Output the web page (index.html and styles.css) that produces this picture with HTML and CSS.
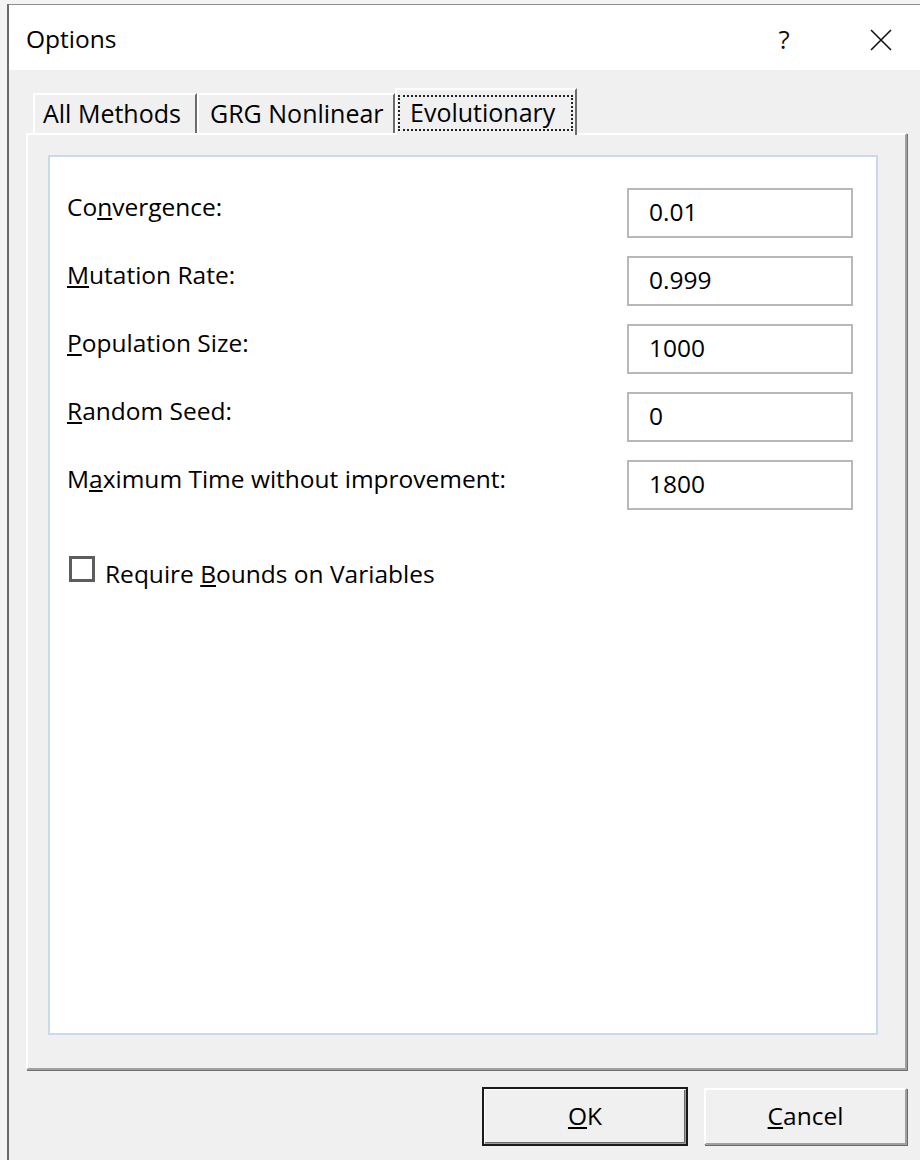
FILE: index.html
```html
<!DOCTYPE html>
<html lang="en">
<head>
<meta charset="utf-8">
<title>Options</title>
<link rel="stylesheet" href="styles.css">
</head>
<body>
<div class="window">
  <div class="titlebar">
    <span class="title">Options</span>
    <span class="help">?</span>
    <span class="close">
      <svg width="24" height="24" viewBox="0 0 24 24"><path d="M2 2 L22 22 M22 2 L2 22" stroke="#111" stroke-width="1.6" fill="none"/></svg>
    </span>
  </div>
  <div class="content">
    <div class="tabs">
      <div class="tab tab-all">All Methods</div>
      <div class="tab tab-grg">GRG Nonlinear</div>
      <div class="tab tab-active"><span class="focus">Evolutionary</span></div>
    </div>
    <div class="panel">
      <div class="page">
        <div class="form">
          <label class="label">Co<u>n</u>vergence:</label>
          <input class="field" type="text" value="0.01">
          <label class="label"><u>M</u>utation Rate:</label>
          <input class="field" type="text" value="0.999">
          <label class="label"><u>P</u>opulation Size:</label>
          <input class="field" type="text" value="1000">
          <label class="label"><u>R</u>andom Seed:</label>
          <input class="field" type="text" value="0">
          <label class="label">M<u>a</u>ximum Time without improvement:</label>
          <input class="field" type="text" value="1800">
        </div>
        <div class="check">
          <span class="box"></span>
          <span class="check-text">Require <u>B</u>ounds on Variables</span>
        </div>
      </div>
    </div>
    <div class="buttons">
      <button class="btn btn-default"><u>O</u>K</button>
      <button class="btn"><u>C</u>ancel</button>
    </div>
  </div>
</div>
</body>
</html>
```
FILE: styles.css
```css
* { box-sizing: border-box; }

html, body {
  margin: 0;
  padding: 0;
}

body {
  width: 920px;
  height: 1160px;
  overflow: hidden;
  background: #f4f4f4;
  font-family: "Open Sans", "Noto Sans", sans-serif;
  color: #000;
}

/* dialog frame, runs off the right edge */
.window {
  margin: 4px 0 0 7px;
  width: 940px;
  height: 1160px;
  border-top: 1px solid #8c8c8c;
  border-left: 2px solid #6a6a6a;
  background: #f0f0f0;
  display: flex;
  flex-direction: column;
}

.titlebar {
  height: 65px;
  flex: none;
  background: #fff;
  display: flex;
  align-items: center;
  padding-left: 17px;
  font-size: 24.5px;
}

.title { color: #000; padding-top: 2px; }

.help {
  margin-left: auto;
  font-size: 26px;
  width: 14px;
  text-align: center;
  color: #111;
  padding-top: 2px;
}

.close {
  display: flex;
  margin-left: 78px;
  margin-right: 54px;
  padding-top: 4px;
}

.content {
  padding: 18px 0 0 17px;
  flex: 1;
}

/* tab strip */
.tabs {
  display: flex;
  align-items: flex-end;
  padding-left: 7px;
  height: 47px;
  position: relative;
  z-index: 1;
  margin-bottom: -2px;
}

.tab {
  height: 40px;
  font-size: 25px;
  line-height: 36px;
  background: #f0f0f0;
  border-top: 2px solid #fff;
  border-left: 2px solid #fff;
  border-right: 2px solid #6d6d6d;
  margin-bottom: 2px;
  white-space: nowrap;
}

.tab-all { width: 164px; padding-left: 8px; border-radius: 2px 0 0 0; }
.tab-grg { width: 198px; padding-left: 11px; }

.tab-active {
  height: 47px;
  width: 182px;
  margin-bottom: 0;
  padding: 5px 0 0 1px;
  line-height: 34px;
}

.focus {
  display: inline-block;
  width: 175px;
  height: 36px;
  padding: 0 0 0 10px;
  border: 2px dotted #222;
  line-height: 30px;
}

/* raised tab page */
.panel {
  width: 881px;
  height: 937px;
  background: #f0f0f0;
  border-top: 2px solid #fff;
  border-left: 2px solid #fff;
  border-right: 2px solid #a0a0a0;
  border-bottom: 2px solid #a0a0a0;
  box-shadow: 1px 1px 0 #707070;
  padding: 20px 27px 33px 20px;
}

.page {
  height: 100%;
  background: #fff;
  border: 2px solid #cbdaeb;
  padding: 31px 23px 0 17px;
}

.form {
  display: grid;
  grid-template-columns: 1fr 226px;
  grid-auto-rows: 50px;
  row-gap: 18px;
}

.label {
  font-size: 24.5px;
  line-height: 30px;
  padding-top: 4px;
  white-space: nowrap;
}

.field {
  width: 226px;
  height: 50px;
  margin: 0;
  border: 2px solid #b8b8b8;
  background: #fff;
  font-family: inherit;
  font-size: 24.5px;
  color: #000;
  padding: 0 0 4px 20px;
  outline: none;
}

.check {
  display: flex;
  align-items: flex-start;
  margin-top: 44px;
  padding-left: 2px;
  font-size: 24.5px;
}

.box {
  width: 26px;
  height: 26px;
  margin-top: 2px;
  border: 3px solid #5d5d5d;
  background: #fff;
  margin-right: 10px;
  flex: none;
}

.check-text { line-height: 30px; padding-top: 5px; }

/* dialog buttons */
.buttons {
  display: flex;
  justify-content: flex-end;
  gap: 17px;
  width: 881px;
  margin-top: 18px;
}

.btn {
  width: 203px;
  height: 57px;
  margin: 0;
  font-family: inherit;
  font-size: 24.5px;
  color: #000;
  background: #f0f0f0;
  border-top: 2px solid #fff;
  border-left: 2px solid #fff;
  border-right: 2px solid #a0a0a0;
  border-bottom: 2px solid #a0a0a0;
  box-shadow: 1px 1px 0 #6a6a6a;
  padding: 0 0 2px 0;
}

.btn-default {
  width: 204px;
  outline: 2px solid #1a1a1a;
  outline-offset: -1px;
  box-shadow: inset -1px -1px 0 #6a6a6a;
}
```
